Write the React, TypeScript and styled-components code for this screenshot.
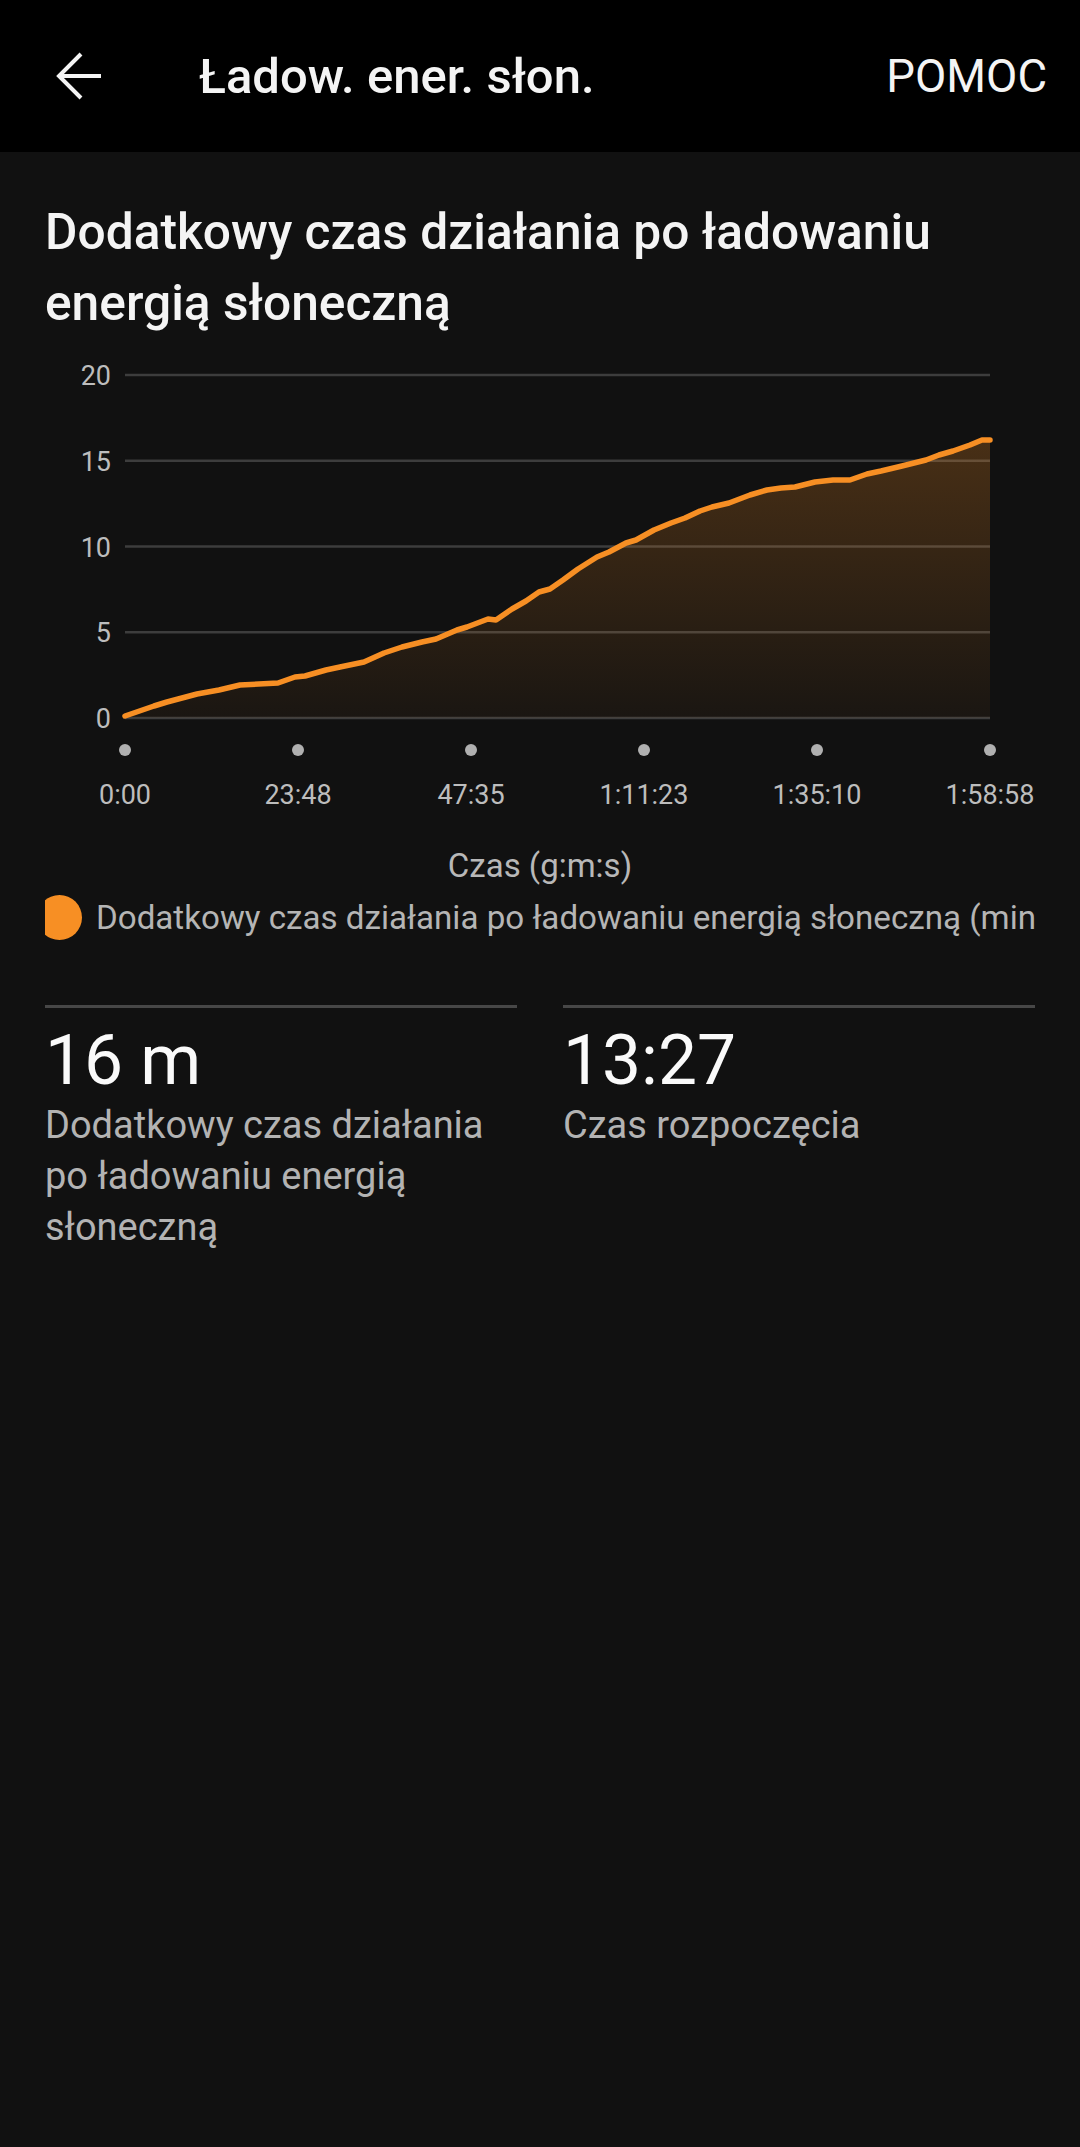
import React from 'react';
import styled, { createGlobalStyle } from 'styled-components';

const GlobalStyle = createGlobalStyle`
  html, body {
    margin: 0;
    padding: 0;
    background: #111111;
  }
  body {
    font-family: Roboto, "Noto Sans", "Liberation Sans", sans-serif;
    -webkit-font-smoothing: antialiased;
  }
`;

const Screen = styled.div`
  min-height: 2147px;
  background: #111111;
  color: #f4f4f4;
`;

const TopBar = styled.header`
  height: 152px;
  background: #000000;
  display: flex;
  align-items: center;
  padding: 0 33px 0 55px;
  box-sizing: border-box;
`;

const BackButton = styled.button`
  width: 48px;
  height: 48px;
  padding: 0;
  border: 0;
  background: transparent;
  color: #f4f4f4;
  display: flex;
  align-items: center;
  justify-content: center;
`;

const BarTitle = styled.h1`
  flex: 1;
  margin: 0 0 0 96px;
  font-size: 49px;
  font-weight: 500;
  color: #f4f4f4;
  white-space: nowrap;
`;

const HelpLink = styled.span`
  font-size: 45.5px;
  font-weight: 400;
  color: #f4f4f4;
`;

const Content = styled.main`
  padding: 0 45px;
`;

const Heading = styled.h2`
  margin: 0;
  padding-top: 45px;
  font-size: 49.7px;
  line-height: 71px;
  font-weight: 500;
  color: #f4f4f4;
`;

const ChartSvg = styled.svg`
  display: block;
  width: 990px;
  height: 507px;
`;

const AxisTitle = styled.div`
  text-align: center;
  font-size: 33px;
  line-height: 40px;
  color: #b8b8b8;
`;

const LegendRow = styled.div`
  margin-top: 9px;
  height: 45px;
  display: flex;
  align-items: center;
  gap: 14px;
  overflow: hidden;
`;

const LegendDot = styled.span<{ $color: string }>`
  flex: none;
  width: 45px;
  height: 45px;
  margin-left: -8px;
  border-radius: 50%;
  background: ${({ $color }) => $color};
`;

const LegendText = styled.span`
  flex: 1;
  min-width: 0;
  font-size: 33.15px;
  color: #b5b5b5;
  white-space: nowrap;
  overflow: hidden;
`;

const StatsGrid = styled.section`
  margin-top: 65px;
  display: grid;
  grid-template-columns: 1fr 1fr;
  column-gap: 46px;
`;

const Stat = styled.div`
  border-top: 3px solid #474747;
`;

const StatValue = styled.div`
  margin-top: 14px;
  font-size: 69.5px;
  line-height: 78px;
  font-weight: 400;
  color: #fafafa;
`;

const StatLabel = styled.div`
  font-size: 38px;
  line-height: 51px;
  color: #b3b3b3;
`;

const ORANGE = '#f78f24';

// chart geometry, in page x / chart-local y
const X_LEFT = 125;
const X_RIGHT = 990;
const Y_ZERO = 379;
const Y_STEP = 85.75;

const yTicks = [0, 5, 10, 15, 20];
const xTicks = ['0:00', '23:48', '47:35', '1:11:23', '1:35:10', '1:58:58'];

const points: [number, number][] = [
  [125, 377], [154, 367], [167, 363], [197, 355], [219, 351], [240, 346],
  [278, 344], [295, 338], [305, 337], [326, 331], [340, 328], [364, 323],
  [384, 314], [402, 308], [422, 303], [436, 300], [457, 291], [467, 288],
  [488, 280], [496, 281], [512, 270], [526, 262], [539, 253], [550, 250],
  [563, 241], [578, 230], [597, 218], [609, 213], [626, 204], [636, 201],
  [654, 191], [671, 184], [685, 179], [700, 172], [712, 168], [729, 164],
  [750, 156], [767, 151], [781, 149], [795, 148], [815, 143], [833, 141],
  [850, 141], [867, 135], [881, 132], [902, 127], [926, 121], [939, 116],
  [953, 112], [970, 106], [982, 101], [990, 101],
];

const SolarChart = () => {
  const line = points.map(([x, y], i) => `${i ? 'L' : 'M'}${x} ${y}`).join(' ');
  const area = `${line} L${X_RIGHT} ${Y_ZERO} L${X_LEFT} ${Y_ZERO} Z`;
  const tickStep = (X_RIGHT - X_LEFT) / (xTicks.length - 1);

  return (
    <ChartSvg viewBox="45 0 990 507">
      <defs>
        <linearGradient id="solarFill" gradientUnits="userSpaceOnUse" x1="0" y1="101" x2="0" y2={Y_ZERO}>
          <stop offset="0" stopColor={ORANGE} stopOpacity="0.24" />
          <stop offset="1" stopColor={ORANGE} stopOpacity="0.04" />
        </linearGradient>
      </defs>

      {yTicks.map((v, i) => {
        const y = Y_ZERO - i * Y_STEP;
        return (
          <g key={v}>
            <line x1={X_LEFT} x2={X_RIGHT} y1={y} y2={y} stroke="#3d3d3d" strokeWidth="2.5" />
            <text x="111" y={y + 10} textAnchor="end" fontSize="27" fill="#bdbdbd" fontFamily="Roboto, sans-serif">
              {v}
            </text>
          </g>
        );
      })}

      <path d={area} fill="url(#solarFill)" />
      <path d={line} fill="none" stroke={ORANGE} strokeWidth="5.5" strokeLinejoin="round" strokeLinecap="round" />

      {xTicks.map((t, i) => {
        const x = X_LEFT + i * tickStep;
        return (
          <g key={t}>
            <circle cx={x} cy="411" r="6" fill="#b0b0b0" />
            <text x={x} y="465" textAnchor="middle" fontSize="27" fill="#bdbdbd" fontFamily="Roboto, sans-serif">
              {t}
            </text>
          </g>
        );
      })}
    </ChartSvg>
  );
};

const App = () => {
  return (
    <>
      <GlobalStyle />
      <Screen>
        <TopBar>
          <BackButton aria-label="Wstecz">
            <svg width="48" height="48" viewBox="0 0 48 48" fill="none" stroke="currentColor" strokeWidth="4">
              <path d="M3 24H46" />
              <path d="M26 2L4 24L26 46" />
            </svg>
          </BackButton>
          <BarTitle>Ładow. ener. słon.</BarTitle>
          <HelpLink>POMOC</HelpLink>
        </TopBar>

        <Content>
          <Heading>Dodatkowy czas działania po ładowaniu energią słoneczną</Heading>
          <SolarChart />
          <AxisTitle>Czas (g:m:s)</AxisTitle>
          <LegendRow>
            <LegendDot $color={ORANGE} />
            <LegendText>Dodatkowy czas działania po ładowaniu energią słoneczną (min)</LegendText>
          </LegendRow>

          <StatsGrid>
            <Stat>
              <StatValue>16 m</StatValue>
              <StatLabel>Dodatkowy czas działania po ładowaniu energią słoneczną</StatLabel>
            </Stat>
            <Stat>
              <StatValue>13:27</StatValue>
              <StatLabel>Czas rozpoczęcia</StatLabel>
            </Stat>
          </StatsGrid>
        </Content>
      </Screen>
    </>
  );
};

export default App;
